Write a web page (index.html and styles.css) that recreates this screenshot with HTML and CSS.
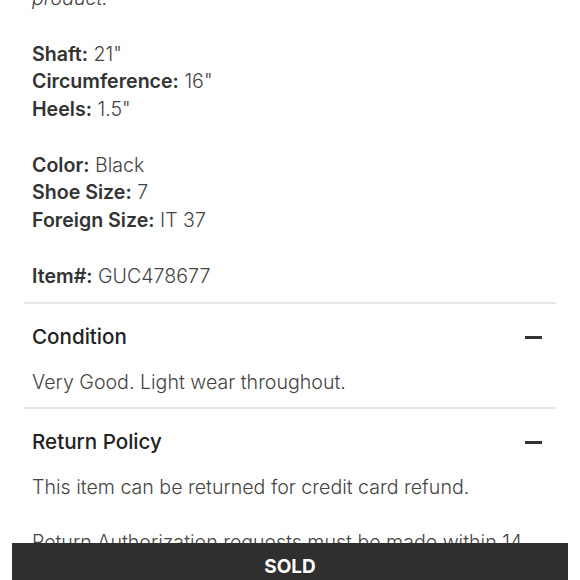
FILE: index.html
```html
<!DOCTYPE html>
<html>
<head>
<meta charset="utf-8">
<link rel="stylesheet" href="styles.css">
</head>
<body>
<main class="page">
  <section class="desc">
    <p class="intro">product.</p>
    <p><span class="lbl">Shaft:</span> 21"<br><span class="lbl">Circumference:</span> 16"<br><span class="lbl">Heels:</span> 1.5"</p>
    <p><span class="lbl">Color:</span> Black<br><span class="lbl">Shoe Size:</span> 7<br><span class="lbl">Foreign Size:</span> IT 37</p>
    <p><span class="lbl">Item#:</span> GUC478677</p>
  </section>
  <section class="acc">
    <div class="acc-head"><h2>Condition</h2><span class="minus"></span></div>
    <div class="acc-body"><p>Very Good. Light wear throughout.</p></div>
  </section>
  <section class="acc">
    <div class="acc-head"><h2>Return Policy</h2><span class="minus"></span></div>
    <div class="acc-body">
      <p>This item can be returned for credit card refund.</p>
      <p>Return Authorization requests must be made within 14 days of delivery.</p>
    </div>
  </section>
</main>
<div class="sold-bar">SOLD</div>
</body>
</html>
```
FILE: styles.css
```css
html, body {
  margin: 0;
  padding: 0;
  background: #fff;
  overflow: hidden;
}
body {
  font-family: Inter, "Liberation Sans", sans-serif;
  color: #444;
  font-size: 19.6px;
  font-weight: 300;
}
.page {
  padding: 0 24px;
}
.desc {
  margin-top: -15px;
  padding: 0 14px 12px 8px;
  border-bottom: 2px solid #e6e6e6;
}
.desc p {
  margin: 0 0 27.75px;
  line-height: 27.75px;
}
.desc p:last-child {
  margin-bottom: 0;
}
.intro {
  font-style: italic;
}
.lbl {
  font-weight: 600;
  color: #333;
}
.acc {
  padding: 19px 14px 11px 8px;
  border-bottom: 2px solid #e6e6e6;
}
.acc-head {
  display: flex;
  align-items: center;
  justify-content: space-between;
  height: 28px;
}
.acc-head h2 {
  margin: 0;
  font-size: 20.6px;
  font-weight: 500;
  color: #222;
  line-height: 28px;
}
.minus {
  width: 17px;
  height: 3px;
  background: #333;
}
.acc-body {
  padding-top: 17px;
}
.acc-body p {
  margin: 0 0 27px;
  line-height: 28px;
}
.acc-body p:last-child {
  margin-bottom: 0;
}
.sold-bar {
  position: fixed;
  left: 12px;
  right: 12px;
  bottom: 0;
  height: 37px;
  background: #2f2f2f;
  color: #fff;
  font-weight: 700;
  font-size: 19px;
  line-height: 24px;
  text-align: center;
  padding-top: 12px;
  box-sizing: border-box;
  overflow: hidden;
}
```
